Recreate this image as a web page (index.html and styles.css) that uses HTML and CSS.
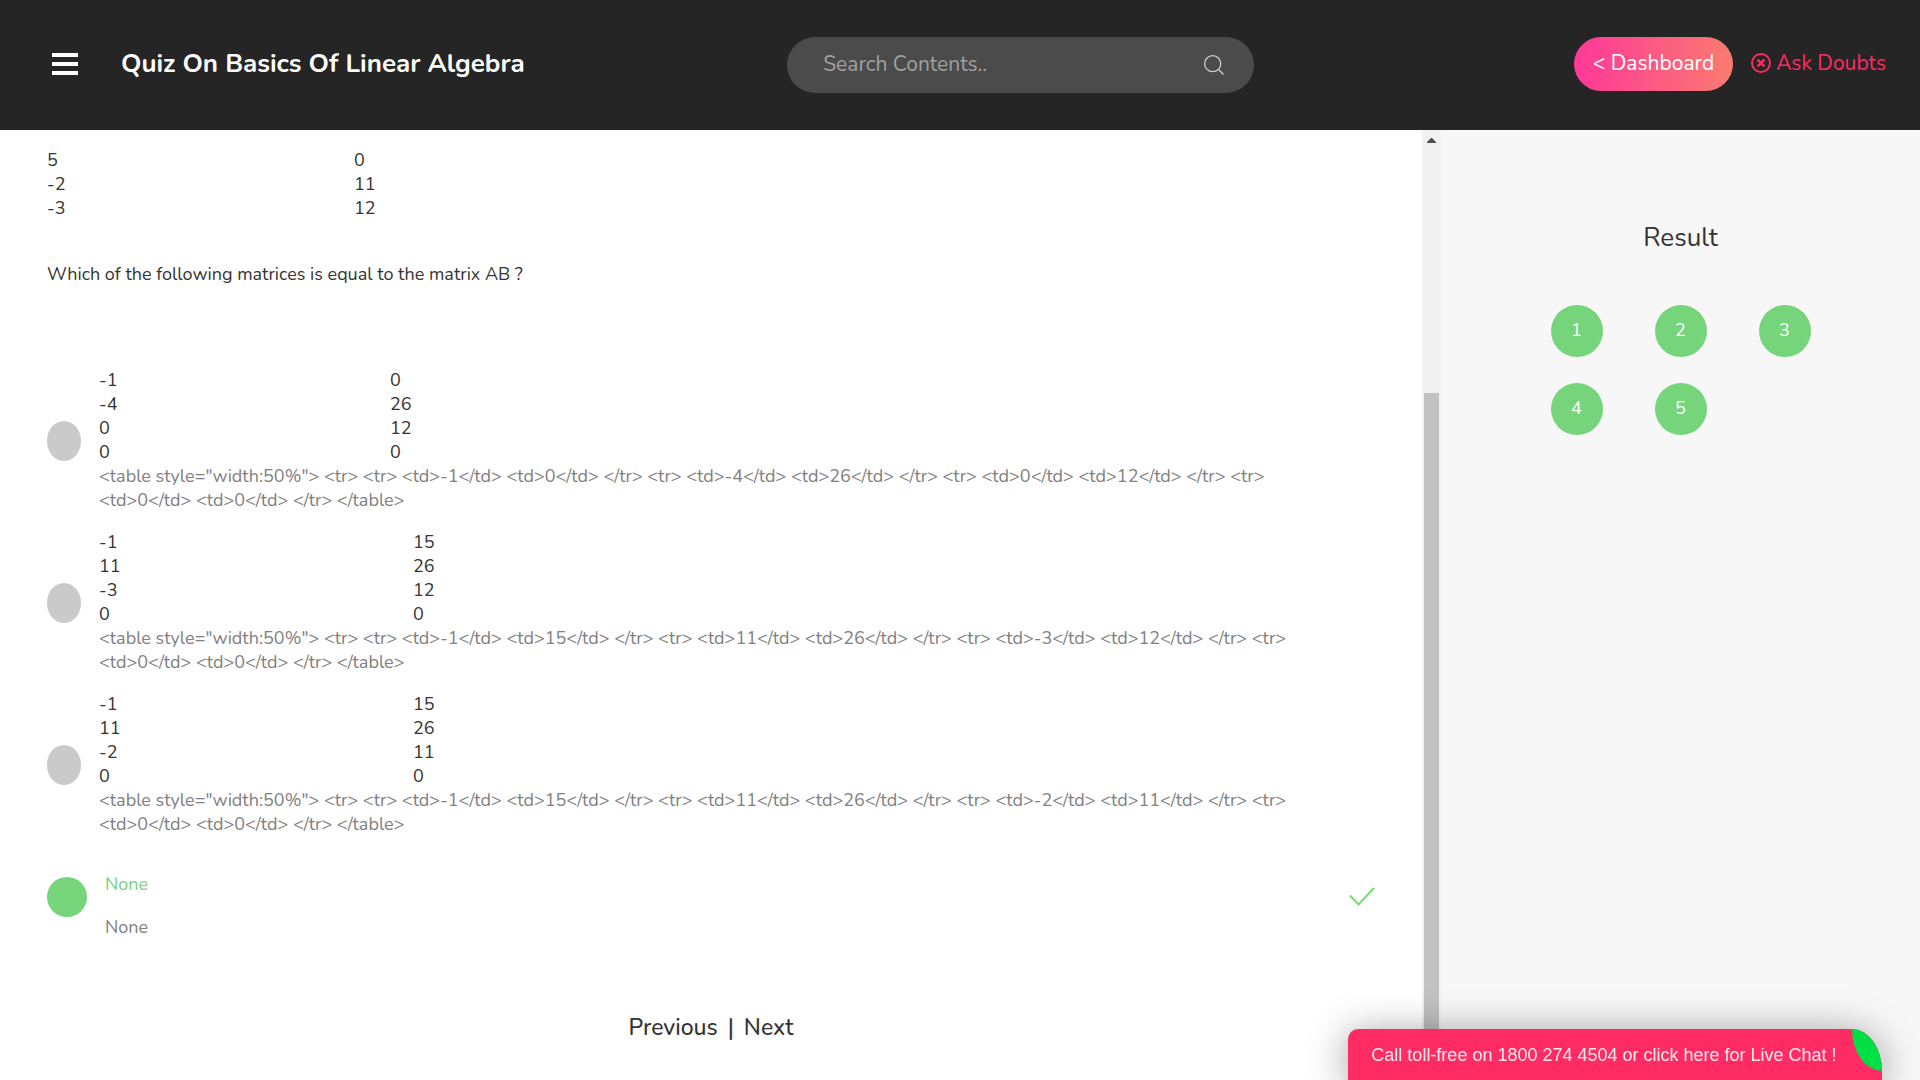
FILE: index.html
```html
<!DOCTYPE html>
<html lang="en">
<head>
<meta charset="utf-8">
<meta name="viewport" content="width=device-width, initial-scale=1">
<title>Quiz On Basics Of Linear Algebra</title>
<link rel="stylesheet" href="styles.css">
</head>
<body>
<header class="topbar">
  <div class="topbar-left">
    <button class="menu-btn" type="button" aria-label="Menu"><svg width="26" height="22" viewBox="0 0 26 22" fill="#fff"><rect width="26" height="4"/><rect y="9" width="26" height="4"/><rect y="18" width="26" height="4"/></svg></button>
    <h1 class="title">Quiz On Basics Of Linear Algebra</h1>
  </div>
  <form class="search">
    <input class="search-input" type="text" placeholder="Search Contents.." aria-label="Search Contents">
    <button class="search-btn" type="button" aria-label="Search"><svg width="20" height="20" viewBox="0 0 20 20" fill="none" stroke="#d0d0d0" stroke-width="1.3"><circle cx="8.7" cy="8.7" r="8"/><path d="M14.3 14.3l5.2 5.2"/></svg></button>
  </form>
  <div class="topbar-right">
    <a class="dashboard" href="#">&lt; Dashboard</a>
    <a class="ask" href="#"><svg width="20" height="20" viewBox="0 0 20 20" fill="none" stroke="currentColor"><circle cx="10" cy="10" r="9" stroke-width="2"/><path d="M6.6 6.6l6.8 6.8M13.4 6.6l-6.8 6.8" stroke-width="2.6"/></svg>Ask Doubts</a>
  </div>
</header>
<div class="layout">
  <main class="quiz">
    <table class="matrix matrix-question">
      <tr><td>5</td><td>0</td></tr>
      <tr><td>-2</td><td>11</td></tr>
      <tr><td>-3</td><td>12</td></tr>
    </table>
    <p class="question">Which of the following matrices is equal to the matrix AB ?</p>
    <div class="options">
      <div class="option">
        <input class="radio" type="radio" name="answer" id="a1">
        <label class="option-body" for="a1">
          <table class="matrix matrix-narrow">
            <tr><td>-1</td><td>0</td></tr>
            <tr><td>-4</td><td>26</td></tr>
            <tr><td>0</td><td>12</td></tr>
            <tr><td>0</td><td>0</td></tr>
          </table>
          <span class="source">&lt;table style="width:50%"&gt; &lt;tr&gt; &lt;tr&gt; &lt;td&gt;-1&lt;/td&gt; &lt;td&gt;0&lt;/td&gt; &lt;/tr&gt; &lt;tr&gt; &lt;td&gt;-4&lt;/td&gt; &lt;td&gt;26&lt;/td&gt; &lt;/tr&gt; &lt;tr&gt; &lt;td&gt;0&lt;/td&gt; &lt;td&gt;12&lt;/td&gt; &lt;/tr&gt; &lt;tr&gt; &lt;td&gt;0&lt;/td&gt; &lt;td&gt;0&lt;/td&gt; &lt;/tr&gt; &lt;/table&gt;</span>
        </label>
      </div>
      <div class="option">
        <input class="radio" type="radio" name="answer" id="a2">
        <label class="option-body" for="a2">
          <table class="matrix">
            <tr><td>-1</td><td>15</td></tr>
            <tr><td>11</td><td>26</td></tr>
            <tr><td>-3</td><td>12</td></tr>
            <tr><td>0</td><td>0</td></tr>
          </table>
          <span class="source">&lt;table style="width:50%"&gt; &lt;tr&gt; &lt;tr&gt; &lt;td&gt;-1&lt;/td&gt; &lt;td&gt;15&lt;/td&gt; &lt;/tr&gt; &lt;tr&gt; &lt;td&gt;11&lt;/td&gt; &lt;td&gt;26&lt;/td&gt; &lt;/tr&gt; &lt;tr&gt; &lt;td&gt;-3&lt;/td&gt; &lt;td&gt;12&lt;/td&gt; &lt;/tr&gt; &lt;tr&gt; &lt;td&gt;0&lt;/td&gt; &lt;td&gt;0&lt;/td&gt; &lt;/tr&gt; &lt;/table&gt;</span>
        </label>
      </div>
      <div class="option">
        <input class="radio" type="radio" name="answer" id="a3">
        <label class="option-body" for="a3">
          <table class="matrix">
            <tr><td>-1</td><td>15</td></tr>
            <tr><td>11</td><td>26</td></tr>
            <tr><td>-2</td><td>11</td></tr>
            <tr><td>0</td><td>0</td></tr>
          </table>
          <span class="source">&lt;table style="width:50%"&gt; &lt;tr&gt; &lt;tr&gt; &lt;td&gt;-1&lt;/td&gt; &lt;td&gt;15&lt;/td&gt; &lt;/tr&gt; &lt;tr&gt; &lt;td&gt;11&lt;/td&gt; &lt;td&gt;26&lt;/td&gt; &lt;/tr&gt; &lt;tr&gt; &lt;td&gt;-2&lt;/td&gt; &lt;td&gt;11&lt;/td&gt; &lt;/tr&gt; &lt;tr&gt; &lt;td&gt;0&lt;/td&gt; &lt;td&gt;0&lt;/td&gt; &lt;/tr&gt; &lt;/table&gt;</span>
        </label>
      </div>
    </div>
    <div class="option option-correct">
      <input class="radio" type="radio" name="answer" id="a4" checked>
      <label class="answer" for="a4"><span class="answer-text">None</span><span class="source">None</span></label>
      <svg class="check" width="26" height="19" viewBox="0 0 26 19" fill="none" stroke="#75e06f" stroke-width="2"><path d="M1 8.500l8.500 9L25 1"/></svg>
    </div>
    <nav class="pager"><a href="#">Previous</a><span>|</span><a href="#">Next</a></nav>
  </main>
  <div class="scrollbar"><svg class="arrow" width="9" height="5" viewBox="0 0 9 5" fill="#505050"><path d="M4 0h1l4 4v1H0V4z"/></svg><div class="thumb"></div></div>
  <aside class="result">
    <h2 class="result-title">Result</h2>
    <div class="numbers">
      <button class="number" type="button">1</button>
      <button class="number" type="button">2</button>
      <button class="number" type="button">3</button>
      <button class="number" type="button">4</button>
      <button class="number" type="button">5</button>
    </div>
  </aside>
</div>
<button class="chat" type="button">Call toll-free on 1800 274 4504 or click here for Live Chat !<span class="chat-dot"></span></button>
</body>
</html>
```
FILE: styles.css
```css
* { box-sizing: border-box; }

body {
  margin: 0;
  min-height: 100vh;
  display: flex;
  flex-direction: column;
  background: #fff;
  color: #333;
  font: 18px/24px Nunito, Lato, sans-serif;
}

a { color: inherit; text-decoration: none; }
button, input { font: inherit; margin: 0; border: 0; padding: 0; background: none; }
svg { display: block; }

.topbar {
  display: grid;
  grid-template-columns: 41% 467px 1fr;
  align-items: start;
  height: 130px;
  padding-top: 37px;
  background: #252525;
}

.topbar-left { display: flex; align-items: center; height: 54px; padding-left: 52px; }
.title { margin: 0 0 0 43px; color: #fff; font-size: 26px; line-height: 32px; font-weight: 700; }

.search {
  display: flex;
  align-items: center;
  height: 56px;
  padding: 0 30px 0 36px;
  border-radius: 28px;
  background: #4b4b4b;
}
.search-input { flex: 1; min-width: 0; padding-bottom: 2px; color: #fff; font-size: 21px; outline: 0; }
.search-input::placeholder { color: #a0a0a0; opacity: 1; }

.topbar-right { display: flex; align-items: flex-start; justify-content: flex-end; gap: 18px; padding-right: 34px; font-size: 21px; line-height: 52px; }
.dashboard {
  padding: 0 19px 2px;
  border-radius: 27px;
  background: linear-gradient(90deg, #ff3898, #f97b70);
  color: #fff;
}
.ask { display: flex; align-items: center; gap: 5px; color: #fe2b63; }

.layout { flex: 1; display: flex; }
.quiz { flex: 1; min-width: 0; padding: 18px 47px 37px; }

.matrix { width: 50%; border-collapse: collapse; table-layout: fixed; }
.matrix td { padding: 0; }
.matrix td:first-child { width: 314px; }
.matrix-question td:first-child { width: 307px; }
.matrix-narrow td:first-child { width: 291px; }

.question { margin: 42px 0 82px; }
.options { display: grid; gap: 18px; }
.option { display: flex; align-items: center; gap: 18px; }
.radio {
  appearance: none;
  flex: none;
  width: 34px;
  height: 40px;
  margin-top: 2px;
  border-radius: 50%;
  background: #cacaca;
}
.option-body { flex: 1; padding-right: 60px; }
.source { display: block; color: #808080; }

.option-correct { align-items: flex-start; margin-top: 36px; }
.option-correct .radio { width: 40px; margin-top: 5px; background: #76d47a; }
.answer { display: grid; gap: 19px; }
.answer-text { color: #76d47a; }
.check { margin: 15px 0 0 auto; }

.pager { display: flex; justify-content: center; gap: 10px; margin-top: 73px; font-size: 23px; line-height: 32px; font-weight: 500; }

.scrollbar { display: flex; flex-direction: column; width: 19px; padding: 8px 2px 0; background: #f1f1f1; }
.arrow { align-self: center; }
.thumb { flex: 1; margin-top: 250px; background: #c1c1c1; }

.result { width: 479px; padding-top: 92px; background: #f7f7f7; }
.result-title { margin: 0 0 51px; text-align: center; font-size: 26px; line-height: 32px; font-weight: 400; }
.numbers { display: grid; grid-template-columns: repeat(3, 52px); gap: 26px 52px; justify-content: center; }
.number { height: 52px; padding-bottom: 2px; border-radius: 50%; background: #76d47a; color: #fff; }

.chat {
  position: fixed;
  right: 38px;
  bottom: 0;
  min-width: 534px;
  height: 51px;
  padding: 0 43px 0 21px;
  border-radius: 10px 30px 0 0 / 10px 42px 0 0;
  background: #ff2c63;
  box-shadow: 0 5px 40px rgba(0, 0, 0, .4);
  color: #fbe9ee;
  font: 18px/24px "Liberation Sans", Arial, sans-serif;
}
.chat-dot {
  position: absolute;
  top: 0;
  right: 0;
  width: 30px;
  height: 42px;
  border-radius: 0 100% 0 100%;
  background: #00df46;
}
```
